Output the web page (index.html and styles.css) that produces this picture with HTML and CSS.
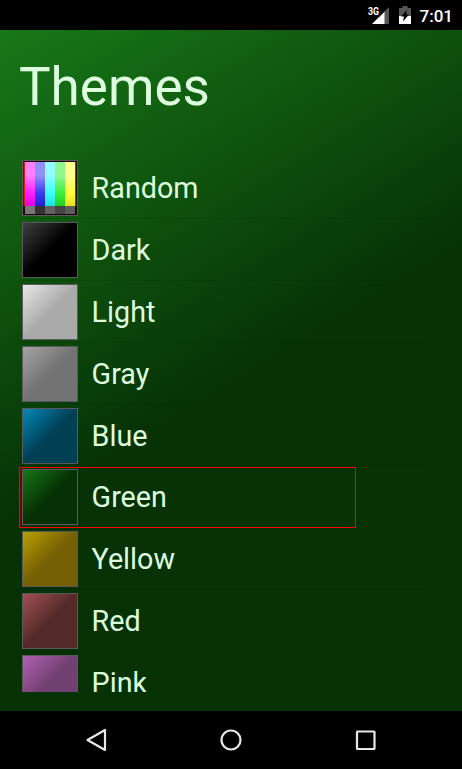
FILE: index.html
```html
<!DOCTYPE html>
<html lang="en">
<head>
  <meta charset="UTF-8" />
  <meta name="viewport" content="width=device-width, initial-scale=1.0"/>
  <title>Themes</title>
  <link rel="stylesheet" href="styles.css">
</head>
<body>
  <div class="status-bar">
    <svg class="signal" width="22" height="20" viewBox="0 0 22 20">
      <path d="M4 19 L21 2 V19 Z" fill="#fff"/>
      <path d="M16.5 2 H21 V19 H16.5 Z" fill="#555"/>
      <path d="M9 0 H21 V2 L17 6 L11 12 H9 Z" fill="#000"/>
      <text x="0" y="9.5" class="network" textLength="11" lengthAdjust="spacingAndGlyphs">3G</text>
    </svg>
    <svg class="battery" width="12" height="18" viewBox="0 0 12 18">
      <path d="M3.5 0 H8.5 V2 H12 V10 H0 V2 H3.5 Z" fill="#555"/>
      <path d="M0 10 H12 V18 H0 Z" fill="#fff"/>
      <path d="M8 4 L2 10.5 H5 L4 15.5 L10 8.5 H7 Z" fill="#000"/>
    </svg>
    <span class="clock">7:01</span>
  </div>

  <div class="screen">
    <h1>Themes</h1>

    <ul class="theme-list">
      <li>
        <svg class="swatch" viewBox="0 0 56 56">
          <defs>
            <linearGradient id="shine" x1="0" y1="0" x2="0" y2="1">
              <stop offset="0" stop-color="#fff" stop-opacity=".5"/>
              <stop offset=".3" stop-color="#fff" stop-opacity=".5"/>
              <stop offset=".7" stop-color="#fff" stop-opacity=".12"/>
              <stop offset="1" stop-color="#000" stop-opacity=".12"/>
            </linearGradient>
          </defs>
          <rect width="56" height="56" fill="#5a5a5a"/>
          <rect x="1" y="1" width="54" height="54" fill="#1c0808"/>
          <path d="M1.5 2 H3 V46 H1.5 Z M53 2 H54 V46 H53 Z" fill="#e01818"/>
          <rect x="3" y="2" width="10" height="44" fill="#f0f"/>
          <rect x="13" y="2" width="10" height="44" fill="#2222f0"/>
          <rect x="23" y="2" width="10" height="44" fill="#2ff"/>
          <rect x="33" y="2" width="10" height="44" fill="#22ee22"/>
          <rect x="43" y="2" width="10" height="44" fill="#ff2"/>
          <rect x="3" y="2" width="50" height="44" fill="url(#shine)"/>
          <rect x="3" y="46" width="10" height="8" fill="#777"/>
          <rect x="13" y="46" width="10" height="8" fill="#333"/>
          <rect x="23" y="46" width="10" height="8" fill="#606060"/>
          <rect x="33" y="46" width="10" height="8" fill="#444"/>
          <rect x="43" y="46" width="10" height="8" fill="#5c5c5c"/>
        </svg>
        <span>Random</span>
      </li>
      <li><div class="swatch dark"></div><span>Dark</span></li>
      <li><div class="swatch light"></div><span>Light</span></li>
      <li><div class="swatch gray"></div><span>Gray</span></li>
      <li><div class="swatch blue"></div><span>Blue</span></li>
      <li class="selected"><div class="swatch green"></div><span>Green</span></li>
      <li><div class="swatch yellow"></div><span>Yellow</span></li>
      <li><div class="swatch red"></div><span>Red</span></li>
      <li><div class="swatch pink"></div><span>Pink</span></li>
    </ul>
  </div>

  <div class="nav-bar">
    <svg width="24" height="24" viewBox="0 0 24 24"><path d="M21 2 V22 L3.5 12 Z"/></svg>
    <svg width="24" height="24" viewBox="0 0 24 24"><circle cx="12" cy="12" r="9.5"/></svg>
    <svg width="24" height="24" viewBox="0 0 24 24"><rect x="3" y="3.5" width="17.5" height="17.5" rx=".5"/></svg>
  </div>
</body>
</html>
```

FILE: styles.css
```css
* {
  box-sizing: border-box;
}
body {
  margin: 0;
  height: 769px;
  display: flex;
  flex-direction: column;
  font-family: Roboto, sans-serif;
  background: #000;
  color: #dfd;
  overflow: hidden;
}
.status-bar {
  height: 30px;
  display: flex;
  justify-content: flex-end;
  padding: 5px 9px 0 0;
  color: #fff;
}
.network {
  font: bold 11px Roboto, sans-serif;
  fill: #fff;
}
.battery {
  margin: 1px 9px 0 9px;
}
.clock {
  font-size: 17px;
  font-weight: 500;
  line-height: 22px;
}
.screen {
  height: 681px;
  padding: 21px 19px 19px;
  background: linear-gradient(148.8deg, #187818, #063206 51.5%);
}
h1 {
  margin: 0;
  height: 106px;
  font-size: 53px;
  font-weight: normal;
  line-height: 73px;
}
.theme-list {
  list-style: none;
  margin: 0;
  padding: 0;
  width: 408px;
  height: 535px;
  overflow: hidden;
}
.theme-list li {
  height: 61.875px;
  display: flex;
  padding: 3px 0 0 3px;
  border-bottom: 1px solid rgba(0, 0, 0, 0.08);
  font-size: 28.7px;
  line-height: 56.5px;
}
.theme-list .selected {
  width: 337px;
  height: 61px;
  margin: 0.5px 0 0.375px;
  padding: 1px 0 0 2px;
  border: 1px solid #f00;
  box-shadow: inset 1px 0 #700;
  line-height: 57px;
}
.swatch {
  width: 56px;
  height: 56px;
  margin-right: 13.6px;
  flex: none;
}
div.swatch {
  border: 1px solid #5a5a5a;
}
.dark {
  background: linear-gradient(135deg, #404040, #000 50%);
}
.light {
  background: linear-gradient(135deg, #e8e8e8, #aaa 50%);
}
.gray {
  background: linear-gradient(135deg, #a4a4a4, #737373 50%);
}
.blue {
  background: linear-gradient(135deg, #0088b8, #004055 50%);
}
.green {
  background: linear-gradient(135deg, #187818, #053005 50%);
}
.yellow {
  background: linear-gradient(135deg, #b8a000, #756005 50%);
}
.red {
  background: linear-gradient(135deg, #a05050, #552a2a 50%);
}
.pink {
  background: linear-gradient(135deg, #b060b0, #704070 50%);
}
.nav-bar {
  height: 58px;
  display: flex;
  justify-content: space-between;
  align-items: center;
  padding: 0 84px;
}
.nav-bar svg {
  fill: none;
  stroke: #e8e8e8;
  stroke-width: 2.2;
  stroke-linejoin: round;
}
```
